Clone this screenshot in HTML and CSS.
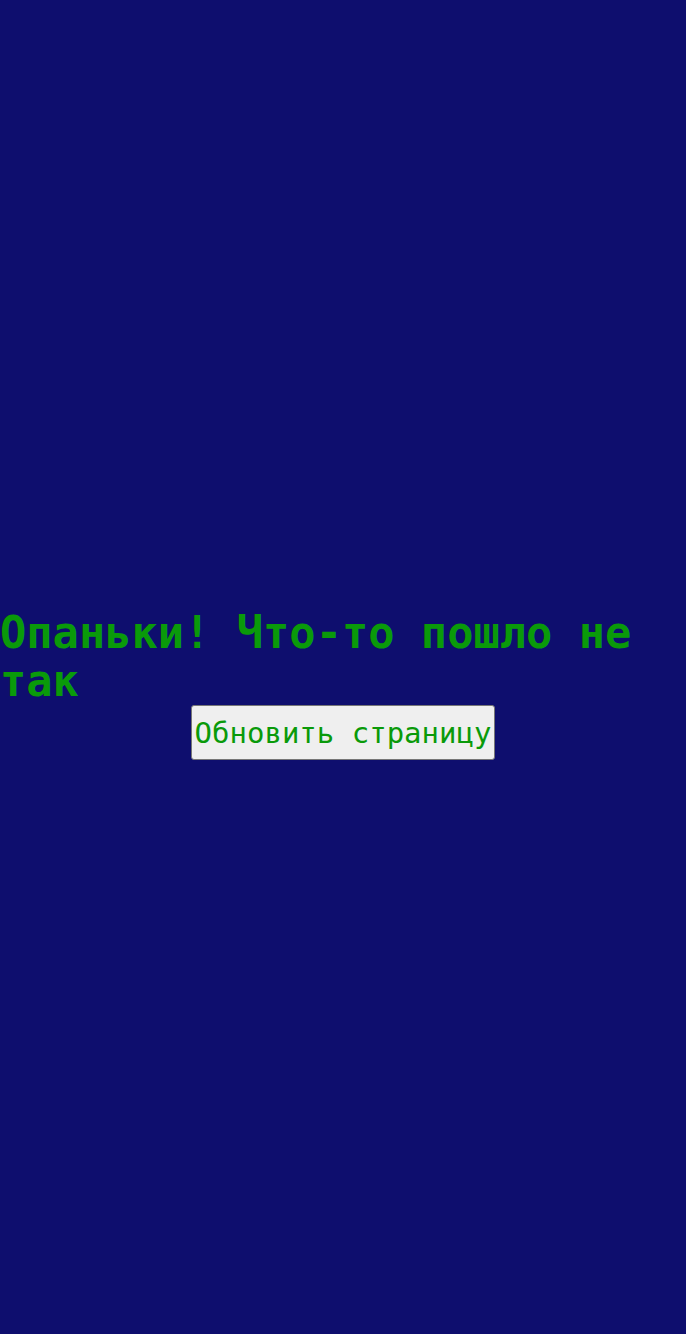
FILE: index.html
```html
<!DOCTYPE html>
<html lang="ru">
<head>
<meta charset="utf-8">
<link rel="stylesheet" href="styles.css">
</head>
<body>
<main class="error">
  <h1 class="error__title">Опаньки! Что-то пошло не так</h1>
  <button class="error__button" type="button">Обновить страницу</button>
</main>
</body>
</html>
```
FILE: styles.css
```css
html, body {
  margin: 0;
  padding: 0;
  height: 100%;
}
body {
  background: #0e0e6e;
  font-family: "DejaVu Sans Mono", monospace;
}
.error {
  min-height: 100%;
  display: flex;
  flex-direction: column;
  justify-content: center;
  align-items: center;
}
.error__title {
  align-self: stretch;
  margin: 35px 0 0;
  font-size: 43.7px;
  line-height: 48px;
  font-weight: bold;
  color: #0a9a0a;
}
.error__button {
  font-family: "DejaVu Sans Mono", monospace;
  font-size: 29px;
  color: #0a9a0a;
  background: #efefef;
  border: 1px solid #767676;
  border-radius: 3px;
  padding: 10px 3px 9px;
  margin-top: 0;
}
```
